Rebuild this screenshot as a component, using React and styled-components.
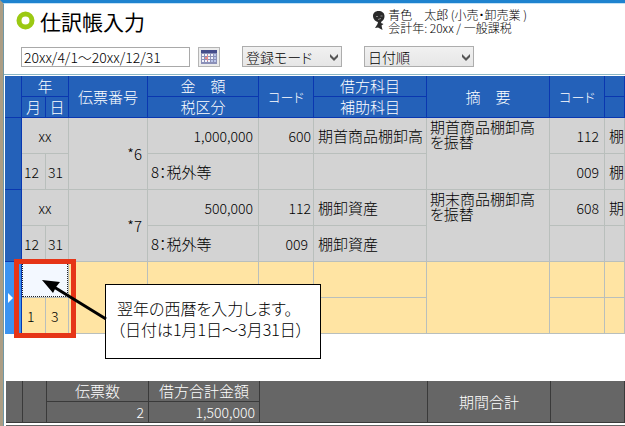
import React from 'react';
import styled, { createGlobalStyle } from 'styled-components';

const theme = {
  blue: '#2461b9',
  blueLine: '#0a37b0',
  gray: '#d3d3d3',
  line: '#b9bfbc',
  active: '#ffe4a3',
  dark: '#666666',
  darkLine: '#3a3a3a',
};

const GlobalStyle = createGlobalStyle`
  * {
    box-sizing: border-box;
  }

  body {
    margin: 0;
    overflow: hidden;
    background: #ffffff;
    color: #000000;
    font-family: 'Noto Sans CJK JP', sans-serif;
    font-size: 15px;
    font-weight: 300;
    font-feature-settings: 'palt';
  }

  input, select, button {
    font: inherit;
    font-feature-settings: inherit;
    color: inherit;
  }
`;

const Window = styled.div`
  min-height: 100vh;
  border-top: 3px solid #1f83cf;
  border-left: 3px solid #ab9d84;
`;

const Content = styled.main`
  min-height: calc(100vh - 3px);
  border-top: 1px solid #c4e2f6;
  border-left: 1px solid #6f98a6;
`;

const Header = styled.header`
  display: flex;
  justify-content: space-between;
  align-items: center;
  height: 35px;
  padding: 0 98px 2px 12px;
`;

const Title = styled.h1`
  display: flex;
  align-items: center;
  gap: 5px;
  margin: 0;
  font-size: 21px;
  line-height: 32px;
  font-weight: 400;
`;

const Account = styled.div`
  display: flex;
  align-items: center;
  gap: 3px;
  font-size: 12px;
  line-height: 13px;
  white-space: pre;
`;

const Toolbar = styled.form`
  display: flex;
  gap: 22px;
  padding: 7px 17px;
`;

const Period = styled.div`
  display: flex;
  align-items: center;
  gap: 8px;
`;

const PeriodInput = styled.input`
  width: 169px;
  height: 20px;
  padding: 0 2px;
  border: 1px solid #a9a9a9;
  font-size: 14px;
`;

const CalendarButton = styled.button`
  display: flex;
  align-items: center;
  justify-content: center;
  width: 22px;
  height: 20px;
  padding: 0;
  border: 1px solid #b5b5b5;
  background: #ececec;
`;

const SelectBox = styled.div`
  display: grid;
  align-items: center;
  width: ${({ $width }) => $width};

  > * {
    grid-area: 1 / 1;
  }

  svg {
    justify-self: end;
    margin-right: 4px;
    pointer-events: none;
  }
`;

const StyledSelect = styled.select`
  appearance: none;
  width: 100%;
  height: 21px;
  padding: 0 3px;
  border: 1px solid #adadad;
  border-radius: 0;
  background: linear-gradient(#f1f1f1, #e6e6e6);
  font-size: 14px;
  line-height: 18px;
`;

const Panel = styled.section`
  padding: 1px 0 0 1px;
  border-top: 1px solid #8ab6c4;
`;

const Table = styled.table`
  width: 100%;
  table-layout: fixed;
  border-collapse: separate;
  border-spacing: 0;
  line-height: 16px;
`;

const Col = styled.col`
  width: ${({ $width }) => $width};
`;

const Th = styled.th`
  height: 21px;
  padding: 0;
  border-right: 1px solid ${theme.blueLine};
  border-bottom: 1px solid ${theme.blueLine};
  background: ${theme.blue};
  color: #ffffff;
  font-weight: inherit;
  white-space: pre;
`;

const CodeTh = styled(Th)`
  font-size: 13px;
`;

const Td = styled.td`
  height: 36px;
  padding: ${({ $pad }) => $pad || '0 5px'};
  border-right: 1px solid ${theme.line};
  border-bottom: 1px solid ${theme.line};
  background: ${({ $active }) => ($active ? theme.active : theme.gray)};
  text-align: ${({ $align }) => $align || 'left'};
  vertical-align: ${({ $valign }) => $valign || 'middle'};
  white-space: ${({ $wrap }) => ($wrap ? 'normal' : 'nowrap')};
  line-height: ${({ $wrap }) => ($wrap ? '15px' : '16px')};
`;

const Num = styled.span`
  font-size: 14px;
`;

const Rail = styled.td`
  padding: 0 0 0 3px;
  border-right: 1px solid ${theme.blueLine};
  border-bottom: 1px solid ${({ $active }) => ($active ? '#3b93f0' : theme.blueLine)};
  background: ${({ $active }) => ($active ? '#3b93f0' : theme.blue)};

  svg {
    display: block;
  }
`;

const YearCell = styled(Td)`
  position: relative;
  padding: 0;
`;

const YearInput = styled.input`
  display: block;
  width: 100%;
  height: 35px;
  padding: 0;
  border: 1px dotted #222222;
  background: #f3f8ff;
  text-align: center;
`;

const Highlight = styled.div`
  position: absolute;
  top: -3px;
  left: -8px;
  width: 62px;
  height: 79px;
  border: 5px solid #e63517;
  pointer-events: none;
`;

const Callout = styled.div`
  position: absolute;
  top: 22px;
  left: 83px;
  padding: 13px 16px 18px 11px;
  border: 1px solid #000000;
  background: #ffffff;
  font-size: 16px;
  line-height: 21px;
`;

const Arrow = styled.svg`
  position: absolute;
  top: 16px;
  left: 18px;
`;

const Totals = styled(Table)`
  margin: 47px 0 0 1px;
  width: calc(100% - 1px);
`;

const Total = styled.td`
  height: 21px;
  padding: 0 4px;
  border-right: 1px solid ${theme.darkLine};
  border-bottom: 1px solid ${theme.darkLine};
  background: ${theme.dark};
  color: #ffffff;
  text-align: ${({ $align }) => $align || 'center'};
`;

const NextBand = styled.div`
  height: 20px;
  margin: 2px 0 0 1px;
  background: ${theme.dark};
`;

const widths = ['17px', '24px', '23px', '79px', '111px', '55px', '113px', '123px', '55px', 'auto'];

const entries = [
  {
    slip: '*6',
    amount: '1,000,000',
    debitCode: '600',
    debit: '期首商品棚卸高',
    subCode: '',
    sub: '',
    summary: ['期首商品棚卸高', 'を振替'],
    creditCode: '112',
    credit: '棚',
    creditSubCode: '009',
    creditSub: '棚',
  },
  {
    slip: '*7',
    amount: '500,000',
    debitCode: '112',
    debit: '棚卸資産',
    subCode: '009',
    sub: '棚卸資産',
    summary: ['期末商品棚卸高', 'を振替'],
    creditCode: '608',
    credit: '期',
    creditSubCode: '',
    creditSub: '',
  },
];

const Columns = () => (
  <colgroup>
    {widths.map((width, i) => (
      <Col key={i} $width={width} />
    ))}
  </colgroup>
);

const Select = ({ label, width, value }) => (
  <SelectBox $width={width}>
    <StyledSelect aria-label={label} defaultValue={value}>
      <option>{value}</option>
    </StyledSelect>
    <svg width="8" height="8" viewBox="0 0 8 8" aria-hidden="true">
      <path d="M0 1L4 5L8 1V4L4 8L0 4Z" fill="#555555" />
    </svg>
  </SelectBox>
);

const CalendarIcon = () => (
  <svg width="16" height="14" viewBox="0 0 16 14" aria-hidden="true">
    <rect width="16" height="14" fill="#8b90b8" />
    <rect width="16" height="3" fill="#454d8c" />
    <path
      d="M1 4h2v2H1zM4 4h2v2H4zM7 4h2v2H7zM10 4h2v2h-2zM1 7h2v2H1zM7 7h2v2H7zM10 7h2v2h-2zM1 10h2v2H1zM4 10h2v2H4zM7 10h2v2H7z"
      fill="#f3f3fb"
    />
    <path d="M13 4h2v2h-2zM13 7h2v2h-2zM10 10h2v2h-2zM13 10h2v2h-2z" fill="#b9c4ea" />
    <path d="M4 7h3v2H4zM6 5h1v6H6z" fill="#e58a8c" />
  </svg>
);

const PersonIcon = () => (
  <svg width="12" height="19" viewBox="0 0 12 19" aria-hidden="true">
    <path
      d="M5.500 0C2 0 0 2.200 0 5C0 8 2.500 10.500 5 11L4.500 13L2 17L5 16.500L9.500 19L8.500 14.500L10.500 13L8 12L8.500 10.500C10.500 9.500 11.500 7.500 11.500 5C11.500 2 9 0 5.500 0Z"
      fill="#2a2a2a"
    />
    <path d="M3 5.500h2M7.500 5h2M5 8.500l3-1" stroke="#8a8a8a" />
  </svg>
);

const EntryRows = ({ entry }) => (
  <>
    <tr>
      <Rail rowSpan={2} />
      <Td colSpan={2} $align="center"><Num>xx</Num></Td>
      <Td rowSpan={2} $align="right">{entry.slip}</Td>
      <Td $align="right"><Num>{entry.amount}</Num></Td>
      <Td $align="right" $pad="0 2px"><Num>{entry.debitCode}</Num></Td>
      <Td $pad="0 4px">{entry.debit}</Td>
      <Td rowSpan={2} $valign="top" $wrap $pad="1px 3px">
        {entry.summary[0]}
        <br />
        {entry.summary[1]}
      </Td>
      <Td $align="right"><Num>{entry.creditCode}</Num></Td>
      <Td $pad="0 0 0 4px">{entry.credit}</Td>
    </tr>
    <tr>
      <Td $pad="0 2px"><Num>12</Num></Td>
      <Td $pad="0 2px"><Num>31</Num></Td>
      <Td $pad="0 3px">8：税外等</Td>
      <Td $align="right"><Num>{entry.subCode}</Num></Td>
      <Td $pad="0 4px">{entry.sub}</Td>
      <Td $align="right"><Num>{entry.creditSubCode}</Num></Td>
      <Td $pad="0 0 0 4px">{entry.creditSub}</Td>
    </tr>
  </>
);

const ActiveRows = () => (
  <>
    <tr>
      <Rail rowSpan={2} $active>
        <svg width="5" height="10" viewBox="0 0 5 10" aria-hidden="true">
          <path d="M0 0L5 5L0 10Z" fill="#ffffff" />
        </svg>
      </Rail>
      <YearCell colSpan={2} $active>
        <YearInput aria-label="年" />
        <Highlight />
        <Callout>
          翌年の西暦を入力します。
          <br />
          （日付は1月1日～3月31日）
        </Callout>
        <Arrow width="67" height="45" viewBox="0 0 67 45" aria-hidden="true">
          <path d="M14 9L66 41" stroke="#000000" strokeWidth="3" />
          <path d="M2 2L20 4L16 9L13 15Z" fill="#000000" />
        </Arrow>
      </YearCell>
      <Td rowSpan={2} $active />
      <Td $active />
      <Td $active />
      <Td $active />
      <Td rowSpan={2} $active />
      <Td $active />
      <Td $active />
    </tr>
    <tr>
      <Td $active $pad="0 5px"><Num>1</Num></Td>
      <Td $active><Num>3</Num></Td>
      <Td $active />
      <Td $active />
      <Td $active />
      <Td $active />
      <Td $active />
    </tr>
  </>
);

const App = () => {
  return (
    <Window>
      <GlobalStyle />
      <Content>
        <Header>
          <Title>
            <svg width="19" height="19" viewBox="0 0 19 19" aria-hidden="true">
              <circle cx="9.500" cy="9.500" r="6.500" fill="none" stroke="#9bc913" strokeWidth="5" />
            </svg>
            仕訳帳入力
          </Title>
          <Account>
            <PersonIcon />
            <div>
              青色　太郎 (小売・卸売業 )
              <br />
              会計年: 20xx / 一般課税
            </div>
          </Account>
        </Header>
        <Toolbar>
          <Period>
            <PeriodInput aria-label="期間" defaultValue="20xx/4/1～20xx/12/31" />
            <CalendarButton type="button" aria-label="カレンダー">
              <CalendarIcon />
            </CalendarButton>
          </Period>
          <Select label="モード" width="100px" value="登録モード" />
          <Select label="並び順" width="110px" value="日付順" />
        </Toolbar>
        <Panel>
          <Table>
            <Columns />
            <thead>
              <tr>
                <Th rowSpan={2} />
                <Th colSpan={2}>年</Th>
                <Th rowSpan={2}>伝票番号</Th>
                <Th>金　額</Th>
                <CodeTh rowSpan={2}>コード</CodeTh>
                <Th>借方科目</Th>
                <Th rowSpan={2}>摘　要</Th>
                <CodeTh rowSpan={2}>コード</CodeTh>
                <Th />
              </tr>
              <tr>
                <Th>月</Th>
                <Th>日</Th>
                <Th>税区分</Th>
                <Th>補助科目</Th>
                <Th />
              </tr>
            </thead>
            <tbody>
              {entries.map((entry) => (
                <EntryRows key={entry.slip} entry={entry} />
              ))}
              <ActiveRows />
            </tbody>
          </Table>
          <Totals>
            <Columns />
            <tbody>
              <tr>
                <Total rowSpan={2} />
                <Total rowSpan={2} />
                <Total colSpan={2}>伝票数</Total>
                <Total>借方合計金額</Total>
                <Total rowSpan={2} colSpan={2} />
                <Total rowSpan={2}>期間合計</Total>
                <Total rowSpan={2} colSpan={2} />
              </tr>
              <tr>
                <Total colSpan={2} $align="right"><Num>2</Num></Total>
                <Total $align="right"><Num>1,500,000</Num></Total>
              </tr>
            </tbody>
          </Totals>
          <NextBand />
        </Panel>
      </Content>
    </Window>
  );
};

export default App;
